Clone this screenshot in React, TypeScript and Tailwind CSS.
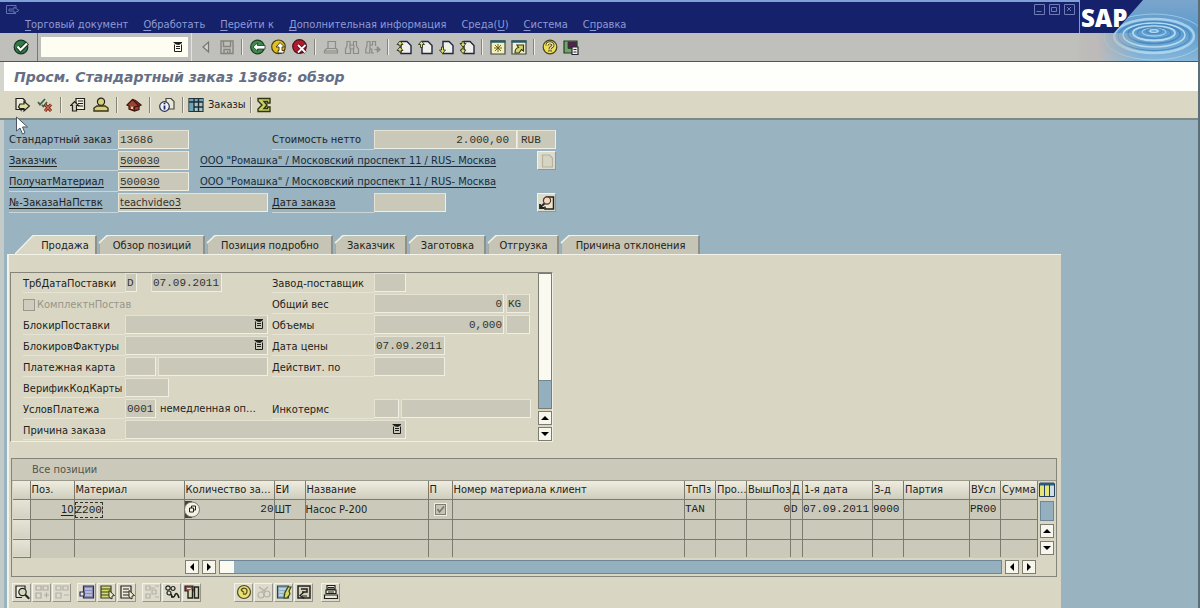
import React, { useState } from "react";
import clsx from "clsx";

type IconProps = { children: React.ReactNode; size?: number };

const Ico = ({ children, size = 16 }: IconProps) => (
  <svg width={size} height={size} viewBox="0 0 16 16" fill="none" stroke="#22221c" strokeWidth="1.2">
    {children}
  </svg>
);

const pageShape = "M5 2.5h6l4 4v8H5z";

const icons: Record<string, React.ReactNode> = {
  ok: (
    <Ico>
      <circle cx="8" cy="8" r="6.8" fill="#2f7a45" stroke="#17331f" />
      <path d="M4.5 7.5l3 3.5L14.5 4" stroke="#17331f" strokeWidth="4" />
      <path d="M4.5 7.5l3 3.5L14 4.5" stroke="#fff" strokeWidth="2.2" />
    </Ico>
  ),
  left: (
    <Ico>
      <path d="M10.5 3v10L5 8z" fill="#d4d3cc" stroke="#77776f" />
    </Ico>
  ),
  save: (
    <Ico>
      <path d="M2 2h12v12.5H2zM4.5 2v5.5h7V2M5 14.5v-4h6v4M8.5 12v2" stroke="#85857c" strokeWidth="1.4" />
    </Ico>
  ),
  back: (
    <Ico>
      <circle cx="7.5" cy="8" r="6.8" fill="#3d8a4c" stroke="#1d3a22" />
      <path d="M3 8l4.5-4v2.5H15v3.500H7.5V12z" fill="#fff" stroke="#1d3a22" strokeWidth="0.8" />
    </Ico>
  ),
  up: (
    <Ico>
      <circle cx="7.5" cy="7.8" r="6.8" fill="#e3c21f" stroke="#4b3c0c" />
      <path d="M9 3.500l4.500 4.500h-2.500v3.500h2v2.500H7V11.500h1V8H5z" fill="#fff" stroke="#3c300c" strokeWidth="0.9" />
    </Ico>
  ),
  cancel: (
    <Ico>
      <circle cx="7.5" cy="7.5" r="6.8" fill="#b3192c" stroke="#4e0d16" />
      <path d="M6 6l7.500 7.500M13.500 6L6 13.500" stroke="#4e0d16" strokeWidth="3.4" />
      <path d="M6 6l7.500 7.500M13.500 6L6 13.500" stroke="#fff" strokeWidth="1.8" />
    </Ico>
  ),
  print: (
    <Ico>
      <path d="M5 9V2.5h7.5V9M3.5 9.5h10l1 2v2.500h-13v-2zM2 12h12" stroke="#8c8c84" />
    </Ico>
  ),
  find: (
    <Ico>
      <path d="M3 2.5h3V6h3.5V2.5h3V7l2 3v4.500H9.5V10h-3v4.500H1.5V10l1.500-3zM6 6v4M9.8 6v4" stroke="#8c8c84" />
    </Ico>
  ),
  findNext: (
    <Ico>
      <path d="M2 2.5h3V6h2.500V2.5h3V7M2 2.5V7L.8 10v4h4V10h2v4H9M5 6v4M9.5 10.5h5.500M12.3 7.5v6M13 8.5l2 2-2 2" stroke="#8c8c84" />
    </Ico>
  ),
  first: (
    <Ico>
      <path d={pageShape} fill="#f1f0e8" stroke="#1e2744" strokeWidth="1.4" />
      <path d="M1 5.5l3-3.500 3 3.500H5v1.500H3V5.5zM1 11.5L4 8l3 3.500H5V13H3v-1.500z" fill="#e0e06c" stroke="#30361b" strokeWidth="0.9" />
    </Ico>
  ),
  prev: (
    <Ico>
      <path d={pageShape} fill="#f1f0e8" stroke="#1e2744" strokeWidth="1.4" />
      <path d="M1.5 5.5l3-3.500 3 3.500h-2v3h-2v-3z" fill="#e0e06c" stroke="#30361b" strokeWidth="0.9" />
    </Ico>
  ),
  next: (
    <Ico>
      <path d={pageShape} fill="#f1f0e8" stroke="#1e2744" strokeWidth="1.4" />
      <path d="M1.5 11l3 3.500 3-3.500h-2V8h-2v3z" fill="#e0e06c" stroke="#30361b" strokeWidth="0.9" />
    </Ico>
  ),
  last: (
    <Ico>
      <path d={pageShape} fill="#f1f0e8" stroke="#1e2744" strokeWidth="1.4" />
      <path d="M1 4.5L4 8l3-3.500H5V2.5H3v2zM1 11l3 3.500L7 11H5V9H3v2z" fill="#e0e06c" stroke="#30361b" strokeWidth="0.9" />
    </Ico>
  ),
  newWindow: (
    <Ico>
      <path d="M1 2h14v13H1z" fill="#f2efb8" stroke="#3d4a45" />
      <path d="M.5 2.5h15" stroke="#2d5a67" strokeWidth="2.5" />
      <path d="M8 5v8M4 9h8M5 6l6 6M11 6l-6 6" stroke="#5e5a12" strokeWidth="0.9" />
    </Ico>
  ),
  shortcut: (
    <Ico>
      <path d="M1 2h14v13H1z" fill="#f2f0cf" stroke="#3d4a45" />
      <path d="M.5 2.5h15" stroke="#2d5a67" strokeWidth="2.5" />
      <path d="M4 14c0-4 1-5 3.500-5.500L6 6h6.500v6l-2-1.500L8 14z" fill="#d4d36d" stroke="#3a3a18" />
    </Ico>
  ),
  help: (
    <Ico>
      <circle cx="8" cy="8" r="6.8" fill="#eedf55" stroke="#49421a" />
      <path d="M5 6.5C5 3 11 3 11 6.2c0 2-3 1.800-3 4M8 11v2" stroke="#49421a" strokeWidth="3" />
      <path d="M5 6.5C5 3 11 3 11 6.2c0 2-3 1.800-3 4M8 11.5v1.500" stroke="#fff9c4" strokeWidth="1.2" />
    </Ico>
  ),
  layout: (
    <Ico>
      <path d="M1 2h13v12H1z" fill="#6fa765" stroke="#263a2b" />
      <path d="M5 3h8.500v6.500H5z" fill="#56214d" stroke="#263a2b" strokeWidth="0.8" />
      <path d="M9 8h6v7.500H9zM10.500 10.500h3M10.500 13h3" fill="#f5f3e8" stroke="#28283c" />
    </Ico>
  ),
  display: (
    <Ico>
      <path d="M10 12.5H2v-11h7l2 2v3" fill="#ecebd8" />
      <path d="M6 7h4V4.5L15.500 9 10 14v-2.500H7V13L4.5 10z" fill="#e3df9b" />
    </Ico>
  ),
  statusCheck: (
    <Ico>
      <path d="M1 5l2 2.500L8 2M5 8l1.500 1.500L10 5" stroke="#456246" strokeWidth="1.8" />
      <path d="M8 7.5l6 6.500M14 7.5L8 14" stroke="#6b2118" strokeWidth="3" />
      <path d="M8 7.5l6 6.500M14 7.5L8 14" stroke="#cf664b" strokeWidth="1.4" />
    </Ico>
  ),
  headerDoc: (
    <Ico>
      <path d="M6 1.5h8.500v11H6zM8 4h5M8 6.5h5M8 9h5" fill="#f3f1df" />
      <path d="M.8 8.5L4.5 4.5l4 4h-2v5.500h-4V8.5z" fill="#d5d3bf" />
    </Ico>
  ),
  person: (
    <Ico>
      <circle cx="8" cy="4.8" r="3.6" fill="#d8cf76" />
      <path d="M1 14V11l3-2h8l3 2v3z" fill="#d8cf76" stroke="#39361b" strokeWidth="1.4" />
    </Ico>
  ),
  house: (
    <Ico>
      <path d="M1 8l5.500-5.500 3 1L15 8l-2 1v3.500L8.5 14 3 12V9z" fill="#9c4331" stroke="#3f1610" />
      <path d="M6.5 2.5L13 9l-4.500 1v4M6 9v3.500" stroke="#3f1610" />
      <path d="M5 9.5h2V12H5z" fill="#e8c9a5" stroke="none" />
    </Ico>
  ),
  infoDoc: (
    <Ico>
      <path d="M7 1.5h5l3 3v7.500H7z" fill="#e9e7d5" stroke="#4a4a44" />
      <circle cx="5.5" cy="9.5" r="4.8" fill="#f2f2f2" stroke="#27335c" />
      <path d="M5.5 8.5v4M5.5 5.8v1.400" stroke="#1f2b66" strokeWidth="1.8" />
    </Ico>
  ),
  orders: (
    <Ico>
      <path d="M1 1.500h14v13H1z" fill="#a9c6c9" stroke="#22333d" />
      <path d="M1.500 2h4v12h-4zM6 2h9v3H6z" fill="#6ea5b6" stroke="none" />
      <path d="M1 5h14M6 2v13M10.5 2v13M6 10h9" stroke="#1d2b35" strokeWidth="1.4" />
    </Ico>
  ),
  sigma: (
    <Ico>
      <path d="M2 1.5h12v4.500h-2.500V4.5H8L11 8l-3 3.500h3.500V10H14v4.500H2V12l4-4-4-4z" fill="#c9d05c" stroke="#2f3515" strokeWidth="1.4" />
    </Ico>
  ),
  detail: (
    <Ico>
      <path d="M2 13.5V2h9v3M2 13.5h6" fill="#f2f0e2" />
      <circle cx="8.5" cy="8" r="3.7" fill="#d4d7bf" />
      <path d="M11.2 10.8l4 4" strokeWidth="2" />
    </Ico>
  ),
  plus: (
    <Ico>
      <path d="M2 2h5v4H2zM9 2h5v4H9zM2 9h5v5H2zM10 11h5M12.5 8.5v5" stroke="#adac9f" />
    </Ico>
  ),
  minus: (
    <Ico>
      <path d="M2 2h5v4H2zM9 2h5v4H9zM2 9h5v5H2zM10 11h5" stroke="#b3b2a5" />
    </Ico>
  ),
  selectAll: (
    <Ico>
      <path d="M4.5 2h10v12h-10z" fill="#888cba" stroke="#2b2d4e" />
      <path d="M6 5h7M6 8h7M6 11h7" stroke="#e7e8ef" />
      <path d="M1 8h4v4H1z" fill="#e6e6df" stroke="#2b2d4e" />
    </Ico>
  ),
  selectBlock: (
    <Ico>
      <path d="M2 2h10v12H2z" fill="#d9dd6b" stroke="#394025" />
      <path d="M2 5h10M2 8h10M2 11h10" stroke="#394025" />
      <path d="M10 6.5l5.500 5-2.500.5V15l-3-2z" fill="#f0edc6" strokeWidth="0.9" />
    </Ico>
  ),
  deselect: (
    <Ico>
      <path d="M2 2h10v12H2zM4 5h6M4 8h6M4 11h6" fill="#eceada" />
      <path d="M10 6.5l5.500 5-2.500.5V15l-3-2z" fill="#f0edc6" strokeWidth="0.9" />
    </Ico>
  ),
  tree: (
    <Ico>
      <path d="M2 2h4v4H2zM8 6h4v4H8zM2 10h4v4H2zM11 2h4M11 13h4M6 4h5" stroke="#b3b2a5" />
    </Ico>
  ),
  chain: (
    <Ico>
      <circle cx="4" cy="4" r="2.2" />
      <circle cx="9" cy="4.5" r="2" />
      <circle cx="5" cy="9" r="2" />
      <path d="M7 10c1 4 3 4 4 1s3-1 4 3M7 13h3" strokeWidth="1.6" />
    </Ico>
  ),
  config: (
    <Ico>
      <path d="M1 2h8v5H1z" fill="#9e4a46" />
      <path d="M4 7v7h4.500V5M10.500 3h4v11h-4z" fill="#d8d5b6" strokeWidth="1.4" />
      <path d="M3 4.5h4" stroke="#f0e2d6" />
    </Ico>
  ),
  clock: (
    <Ico>
      <circle cx="8" cy="8" r="6.5" fill="#eadf70" stroke="#4b461f" />
      <path d="M5 6c2-3 6-2 6 1S9 11 7 9.500M5 6l3 2.500" stroke="#4b461f" />
    </Ico>
  ),
  cut: (
    <Ico>
      <circle cx="5" cy="11" r="3" stroke="#b3b2a5" />
      <circle cx="11" cy="10" r="3" stroke="#b3b2a5" />
      <path d="M3 3l7 5M12 3L6 8" stroke="#b3b2a5" />
    </Ico>
  ),
  edit: (
    <Ico>
      <path d="M1.5 2h11v12h-11z" fill="#8cb0c4" stroke="#28404e" />
      <path d="M3 5h7M3 8h5M3 11h4" stroke="#f1f1ea" />
      <path d="M8 14L9 8.500l3-5.500h3l-2 4 1 3-3 4z" fill="#dada59" stroke="#384021" />
    </Ico>
  ),
  route: (
    <Ico>
      <path d="M2 14V2h12v12zM5 5h6v3H6" fill="#d2cfbd" strokeWidth="1.5" />
      <path d="M11 12H6M8 8l-4 3.500 4 3" />
    </Ico>
  ),
  stack: (
    <Ico>
      <path d="M4 1.5h8V5H4zM3 6h10v3.500H3zM1.5 11h13v3.500h-13zM5 3.5h6M5 8h6" fill="#eceada" />
    </Ico>
  ),
  partner: (
    <Ico>
      <path d="M7 2h7.500v12H6v-2.500" fill="#e9e6cf" strokeWidth="1.5" />
      <circle cx="8" cy="5.5" r="3.6" fill="#efd9c5" stroke="#5b3527" />
      <path d="M5.500 8.500L1.500 12M1 9v4h4.500" strokeWidth="1.8" />
    </Ico>
  ),
  blankPage: (
    <Ico>
      <path d="M3.5 2h7l3 3v9h-10z" fill="#d6d4c3" stroke="#b4b2a0" />
    </Ico>
  ),
  list: (
    <svg width="10" height="10" viewBox="0 0 10 10" fill="none" stroke="#1f1f1a">
      <path d="M1.5 2.500v7h7v-7" />
      <path d="M3 4.500h4M3 6.500h4" />
      <path d="M0 0h9v1L6 3 3 2.500z" fill="#1f1f1a" stroke="none" />
    </svg>
  ),
};

const systemButtons = [
  ["left", "save"],
  ["back", "up", "cancel"],
  ["print", "find", "findNext"],
  ["first", "prev", "next", "last"],
  ["newWindow", "shortcut"],
  ["help", "layout"],
];

const appButtons = [["display", "statusCheck"], ["headerDoc", "person"], ["house"], ["infoDoc"]];

const footerButtons = [
  { names: ["detail", "plus", "minus"], gap: "mr-[6px]" },
  { names: ["selectAll", "selectBlock", "deselect"], gap: "mr-[6px]" },
  { names: ["tree", "chain", "config"], gap: "mr-[33px]" },
  { names: ["clock", "cut", "edit", "route"], gap: "mr-[8px]" },
  { names: ["stack"], gap: "" },
];

const menu = [
  ["", "Т", "орговый документ"],
  ["", "О", "бработать"],
  ["", "П", "ерейти к"],
  ["", "Д", "ополнительная информация"],
  ["Среда(", "U", ")"],
  ["", "С", "истема"],
  ["С", "п", "равка"],
];

const tabs = [
  { name: "Продажа", width: "w-[82px]" },
  { name: "Обзор позиций", width: "w-[108px]" },
  { name: "Позиция подробно", width: "w-[128px]" },
  { name: "Заказчик", width: "w-[74px]" },
  { name: "Заготовка", width: "w-[79px]" },
  { name: "Отгрузка", width: "w-[73px]" },
  { name: "Причина отклонения", width: "w-[141px]" },
];

const columns = [
  { title: "", width: "w-[17px]" },
  { title: "Поз.", width: "w-[44px]" },
  { title: "Материал", width: "w-[110px]" },
  { title: "Количество за…", width: "w-[90px]" },
  { title: "ЕИ", width: "w-[31px]" },
  { title: "Название", width: "w-[123px]" },
  { title: "П", width: "w-[24px]" },
  { title: "Номер материала клиент", width: "" },
  { title: "ТпПз", width: "w-[31px]" },
  { title: "Про…", width: "w-[31px]" },
  { title: "ВышПоз", width: "w-[44px]" },
  { title: "Д", width: "w-[12px]" },
  { title: "1-я дата", width: "w-[70px]" },
  { title: "З-д", width: "w-[31px]" },
  { title: "Партия", width: "w-[66px]" },
  { title: "ВУсл", width: "w-[31px]" },
  { title: "Сумма", width: "w-[37px]" },
];

const mono = "font-['Liberation_Mono',monospace]";

interface FieldProps {
  id: string;
  value?: string;
  className?: string;
  label?: string;
}

// read-only SAP input
const Field = ({ id, value = "", className, label }: FieldProps) => (
  <input
    id={id}
    readOnly
    value={value}
    aria-label={label}
    className={clsx(
      "h-[19px] shrink-0 border border-t-[#e4e3d4] border-l-[#e4e3d4] border-r-[#f0efe4] border-b-[#f0efe4] bg-[#c9c8b9] px-px text-[11px] text-[#33332c] outline-none",
      className
    )}
  />
);

const ListField = ({ id, className }: { id: string; className: string }) => (
  <div className={clsx("relative", className)}>
    <Field id={id} className="w-full" />
    <button aria-label="Список" className="absolute right-1 top-1">
      {icons.list}
    </button>
  </div>
);

const HeadLabel = ({ htmlFor, children, link }: { htmlFor: string; children: React.ReactNode; link?: boolean }) => (
  <label
    htmlFor={htmlFor}
    className={clsx("h-[20px] shrink-0 border-b border-[#c8d6d8] leading-[20px]", link && "underline underline-offset-2")}
  >
    {children}
  </label>
);

const FormLabel = ({ htmlFor, children }: { htmlFor: string; children: React.ReactNode }) => (
  <label htmlFor={htmlFor} className="h-[20px] whitespace-nowrap border-b border-[#e5e3d4] leading-[21px]">
    {children}
  </label>
);

const Arrow = ({ dir }: { dir: "up" | "down" | "left" | "right" }) => {
  const d = {
    up: "M2 8h8L6 4z",
    down: "M2 4h8L6 8z",
    left: "M8 2v8L4 6z",
    right: "M4 2v8l4-4z",
  }[dir];
  return (
    <button
      aria-label={dir}
      className="flex h-[14px] w-[14px] shrink-0 items-center justify-center border border-[#7d7c70] bg-[#f7f6ec]"
    >
      <svg width="12" height="12" viewBox="0 0 12 12" className="shrink-0">
        <path d={d} fill="#000" />
      </svg>
    </button>
  );
};

const Separator = () => (
  <span className="flex h-[16px] w-[10px] shrink-0 justify-center">
    <span className="w-px bg-[#85847a]" />
    <span className="w-px bg-[#efeee4]" />
  </span>
);

const Raised = ({ name }: { name: string }) => (
  <button
    aria-label={name}
    className="flex h-[19px] w-[19px] items-center justify-center border border-t-[#f4f3e8] border-l-[#f4f3e8] border-r-[#97968a] border-b-[#97968a] bg-[#dddbcc]"
  >
    {icons[name]}
  </button>
);

const Brand = () => (
  <svg width="119" height="61" viewBox="0 0 119 61" className="shrink-0">
    <defs>
      <linearGradient id="water" x1="0" y1="0" x2="0" y2="1">
        <stop offset="0" stopColor="#7ba5cb" />
        <stop offset="0.5" stopColor="#5b9bd0" />
        <stop offset="1" stopColor="#87b7da" />
      </linearGradient>
      <linearGradient id="fade" x1="0" y1="0" x2="1" y2="0">
        <stop offset="0" stopColor="#bdbdb9" />
        <stop offset="0.3" stopColor="#bdbab9" />
        <stop offset="1" stopColor="#bdbdb9" stopOpacity="0" />
      </linearGradient>
    </defs>
    <path d="M0 0h119v61H0z" fill="url(#water)" />
    <g fill="none">
      <g stroke="#b6ddf1">
        <ellipse cx="75" cy="31" rx="4" ry="1.5" strokeWidth="1.5" />
        <ellipse cx="75" cy="32" rx="12" ry="4" />
        <ellipse cx="75" cy="33" rx="21" ry="7.5" strokeWidth="1.8" />
        <ellipse cx="75" cy="35" rx="31" ry="12" strokeWidth="1.5" />
        <ellipse cx="75" cy="36" rx="40" ry="17" strokeWidth="2.5" opacity="0.8" />
        <ellipse cx="75" cy="37" rx="50" ry="23" opacity="0.6" />
      </g>
      <g stroke="#3b7cb5" opacity="0.7">
        <ellipse cx="75" cy="31" rx="8" ry="2.5" />
        <ellipse cx="75" cy="33" rx="17" ry="5.5" />
        <ellipse cx="75" cy="34" rx="26" ry="9.5" strokeWidth="1.5" />
        <ellipse cx="75" cy="36" rx="36" ry="14.5" />
      </g>
    </g>
    <path d="M0 33h62v28H0z" fill="url(#fade)" />
    <path d="M0 0h64L35 33H0z" fill="#15216a" />
    <path d="M0 0h1v33H0z" fill="#8d96c0" />
    <text x="2" y="27" fill="#fff" fontSize="24" fontWeight="800" fontFamily="'Open Sans', sans-serif">
      SAP
    </text>
  </svg>
);

interface CellProps {
  children?: React.ReactNode;
  className?: string;
  head?: boolean;
  last?: boolean;
}

const Cell = ({ children, className, head, last }: CellProps) => (
  <td
    className={clsx(
      "overflow-hidden whitespace-nowrap border-r border-[#7b7a6e] p-0 leading-[17px]",
      (!last || head) && "border-b",
      head && "bg-linear-to-b from-[#e6e4d5] to-[#d3d1c1]",
      className
    )}
  >
    {children}
  </td>
);

const ItemsTable = () => (
  <table className="w-full table-fixed border-collapse text-left">
    <colgroup>
      {columns.map((c, i) => (
        <col key={i} className={c.width} />
      ))}
    </colgroup>
    <thead>
      <tr className="h-[18px] bg-linear-to-b from-[#efede0] to-[#cfcdbd]">
        {columns.map((c, i) => (
          <th
            key={i}
            className="overflow-hidden whitespace-nowrap border-r border-b border-[#7b7a6e] p-0 pl-px font-normal leading-[17px]"
          >
            {c.title}
          </th>
        ))}
      </tr>
    </thead>
    <tbody>
      <tr className="h-[20px]">
        <Cell head />
        <Cell className="text-right underline underline-offset-2">10</Cell>
        <Cell>
          <span className={clsx("inline-block border border-dashed border-[#33332c] leading-[14px]", mono)}>Z200</span>
        </Cell>
        <Cell>
          <span className="flex items-center justify-between">
            <svg width="15" height="17" viewBox="0 0 15 17" fill="none">
              <path d="M0 0h7v17H0z" fill="#44443c" />
              <circle cx="7" cy="8.5" r="7.5" fill="#f3f1e4" stroke="#77766a" />
              <path d="M4.5 7h4v4h-4zM6.5 7V5h4v4h-2" stroke="#22221c" />
            </svg>
            <span className={mono}>20</span>
          </span>
        </Cell>
        <Cell>ШТ</Cell>
        <Cell>Насос P-200</Cell>
        <Cell className="text-center">
          <span className="inline-flex h-[13px] w-[13px] items-center justify-center border border-[#efeee2] bg-[#c4c3b4] align-middle">
            <input
              type="checkbox"
              checked
              readOnly
              aria-label="П"
              className="h-[11px] w-[11px] appearance-none border border-[#7e7d70]"
            />
            <svg width="9" height="9" viewBox="0 0 9 9" className="pointer-events-none absolute" fill="none">
              <path d="M1.5 4l2 3L8 1.500" stroke="#77766b" strokeWidth="1.6" />
            </svg>
          </span>
        </Cell>
        <Cell />
        <Cell className={mono}>TAN</Cell>
        <Cell />
        <Cell className={clsx("text-right", mono)}>0</Cell>
        <Cell className={mono}>D</Cell>
        <Cell className={mono}>07.09.2011</Cell>
        <Cell className={mono}>9000</Cell>
        <Cell />
        <Cell className={mono}>PR00</Cell>
        <Cell />
      </tr>
      <tr className="h-[20px]">
        {columns.map((_, i) => (
          <Cell key={i} head={i === 0} />
        ))}
      </tr>
      <tr className="h-[18px]">
        {columns.map((_, i) => (
          <Cell key={i} head={i === 0} last />
        ))}
      </tr>
    </tbody>
  </table>
);

export default function App() {
  const [activeTab, setActiveTab] = useState("Продажа");
  const [command, setCommand] = useState("");

  return (
    <div className="relative flex min-h-screen w-full flex-col border-r-2 border-[#5c6f78] bg-[#99b3c1] font-['DejaVu_Sans_Condensed','DejaVu_Sans',sans-serif] text-[11px] text-[#22221c]">
      <header className="flex border-b border-[#55554f] bg-[#bfbfbb]">
        <div className="min-w-0 flex-1">
          <div className="h-[33px] border-t-2 border-[#7f9fd6] bg-[#15216a] text-[#8d9bd6]">
            <div className="flex h-[15px] items-center justify-between pl-[5px] pr-1">
              <svg width="15" height="12" viewBox="0 0 15 12" fill="none" stroke="#6370ad">
                <path d="M11 9.5H1.5v-8H11V4M4 5h5V3l5 3.500L9 9V7H4z" />
              </svg>
              <div className="flex gap-1">
                {["M2.500 7.500h5", "M2.500 3.500h5v4h-5z", "M3 3l4 4M7 3L3 7"].map((d) => (
                  <button key={d} aria-label="Окно">
                    <svg width="11" height="11" viewBox="0 0 11 11" fill="none" stroke="#6f7bb5">
                      <path d="M.5.5h10v10H.5z" />
                      <path d={d} />
                    </svg>
                  </button>
                ))}
              </div>
            </div>
            <nav className="flex gap-[15px] pl-[25px] leading-[16px]">
              {menu.map(([before, key, after]) => (
                <button key={after} className="whitespace-nowrap">
                  {before}
                  <span className="underline underline-offset-2">{key}</span>
                  {after}
                </button>
              ))}
            </nav>
          </div>
          <div className="flex h-[28px] items-center">
            <button
              aria-label="Enter"
              className="flex h-full w-[38px] items-center justify-center border-r border-[#77776f] pl-1"
            >
              {icons.ok}
            </button>
            <div className="relative ml-[3px] mr-[3px]">
              <input
                aria-label="Команда"
                value={command}
                onChange={(e) => setCommand(e.target.value)}
                className="block h-[20px] w-[147px] bg-[#fdfdf2] px-1 outline-none"
              />
              <span className="absolute right-[5px] top-[5px]">{icons.list}</span>
            </div>
            <span className="mr-[3px] h-full w-px bg-[#e4e4df]" />
            {systemButtons.map((group, i) => (
              <React.Fragment key={i}>
                {i > 0 && <Separator />}
                {group.map((name) => (
                  <button key={name} aria-label={name} className="flex w-[21px] shrink-0 justify-center">
                    {icons[name]}
                  </button>
                ))}
              </React.Fragment>
            ))}
          </div>
        </div>
        <Brand />
      </header>

      <h1 className="h-[29px] border-l-4 border-[#d5d5cf] bg-[#fefefa] pl-[10px] font-['DejaVu_Sans',sans-serif] text-[14px] font-bold italic leading-[30px] text-[#656f86]">
        Просм. Стандартный заказ 13686: обзор
      </h1>

      <div className="flex h-[29px] items-center border-b-2 border-[#7b8a86] bg-[#dad7c4] pl-[10px]">
        {appButtons.map((group, i) => (
          <React.Fragment key={i}>
            {group.map((name) => (
              <button key={name} aria-label={name} className="flex w-[23px] shrink-0 justify-center">
                {icons[name]}
              </button>
            ))}
            <Separator />
          </React.Fragment>
        ))}
        <button className="flex items-center gap-1">
          {icons.orders}
          <span className="pt-[2px]">Заказы</span>
        </button>
        <Separator />
        <button aria-label="Сумма">{icons.sigma}</button>
      </div>

      <svg width="14" height="20" viewBox="0 0 14 20" className="pointer-events-none absolute left-[15px] top-[116px]">
        <path d="M1.5 1v14l3.500-3 2.500 6 2.500-1-2.500-6h5z" fill="#fff" stroke="#4a5560" />
      </svg>

      <main className="flex flex-1 flex-col border-l-4 border-[#c3cbc9]">
        <section className="w-[552px] pl-[5px] pt-[10px]">
          <div className="flex h-[21px]">
            <div className="flex w-[109px] flex-col">
              <HeadLabel htmlFor="order">Стандартный заказ</HeadLabel>
            </div>
            <Field id="order" value="13686" className={clsx("w-[71px]", mono)} />
            <div className="ml-[83px] flex w-[102px] flex-col">
              <HeadLabel htmlFor="net">Стоимость нетто</HeadLabel>
            </div>
            <Field id="net" value="2.000,00" className={clsx("w-[143px] pr-[7px] text-right", mono)} />
            <Field id="currency" label="Валюта" value="RUB" className={clsx("w-[39px] pl-[3px]", mono)} />
          </div>
          {[
            ["Заказчик", "customer"],
            ["ПолучатМатериал", "receiver"],
          ].map(([title, id]) => (
            <div key={id} className="flex h-[21px]">
              <div className="flex w-[109px] flex-col">
                <HeadLabel htmlFor={id} link>
                  {title}
                </HeadLabel>
              </div>
              <Field id={id} value="500030" className={clsx("w-[71px] underline underline-offset-2", mono)} />
              <a href="#partner" className="ml-[11px] whitespace-nowrap leading-[20px] text-[#172c3c] underline underline-offset-2">
                ООО "Ромашка" / Московский проспект 11 / RUS- Москва
              </a>
              {id === "customer" && (
                <span className="ml-auto">
                  <Raised name="blankPage" />
                </span>
              )}
            </div>
          ))}
          <div className="flex h-[21px]">
            <div className="flex w-[109px] flex-col">
              <HeadLabel htmlFor="po" link>
                №-ЗаказаНаПствк
              </HeadLabel>
            </div>
            <Field id="po" value="teachvideo3" className="w-[150px] underline underline-offset-2" />
            <div className="ml-1 flex w-[102px] flex-col">
              <HeadLabel htmlFor="poDate" link>
                Дата заказа
              </HeadLabel>
            </div>
            <Field id="poDate" className="w-[72px]" />
            <span className="ml-auto">
              <Raised name="partner" />
            </span>
          </div>
        </section>

        <div role="tablist" className="mt-[21px] flex pl-[11px]">
          {tabs.map((t) => {
            const active = t.name === activeTab;
            return (
              <button
                key={t.name}
                role="tab"
                aria-selected={active}
                onClick={() => setActiveTab(t.name)}
                className={clsx("flex h-[19px] shrink-0", t.width)}
              >
                {active ? (
                  <svg width="20" height="19" viewBox="0 0 20 19" className="shrink-0">
                    <path d="M0 19L18 .5h2V19z" fill="#d9d7c4" />
                    <path d="M0 19L18 .5h2" fill="none" stroke="#f3f2e8" strokeWidth="1.3" />
                  </svg>
                ) : (
                  <svg width="12" height="19" viewBox="0 0 12 19" className="shrink-0">
                    <path d="M2 19V8L10 .5h2V19z" fill="#c5c4b5" />
                    <path d="M2 8L10 .5h2" fill="none" stroke="#f3f2e8" strokeWidth="1.6" />
                    <path d="M2.500 19V9" stroke="#a9a99d" />
                  </svg>
                )}
                <span
                  className={clsx(
                    "h-full flex-1 whitespace-nowrap border-t border-r-2 border-t-[#f3f2e8] border-r-[#8f9087] text-center leading-[19px]",
                    active ? "bg-[#d9d7c4]" : "bg-[#c5c4b5] pr-2"
                  )}
                >
                  {t.name}
                </span>
              </button>
            );
          })}
        </div>

        <section className="mr-[137px] ml-[3px] flex-1 border-t border-l-2 border-t-[#f3f2e8] border-l-[#f3f2e8] bg-[#d9d7c4] pt-[17px] pb-1">
          <div className="ml-px flex h-[170px] w-[543px] border border-t-[#85847a] border-l-[#85847a] border-r-[#f0efe4] border-b-[#f0efe4]">
            <div className="grid flex-1 grid-cols-[102px_147px_102px_1fr] content-start pl-[12px]">
              <FormLabel htmlFor="delivDate">ТрбДатаПоставки</FormLabel>
              <div className="flex h-[21px] gap-[14px]">
                <Field id="delivType" label="Тип даты" value="D" className={clsx("w-[12px]", mono)} />
                <Field id="delivDate" value="07.09.2011" className={clsx("w-[71px]", mono)} />
              </div>
              <FormLabel htmlFor="plant">Завод-поставщик</FormLabel>
              <Field id="plant" className="w-[32px]" />

              <label className="col-span-2 flex h-[21px] items-center gap-[2px] text-[#96958a]">
                <input type="checkbox" disabled className="h-[12px] w-[12px] appearance-none border border-[#99988b] bg-[#cfcdbd]" />
                <span className="pt-[2px]">КомплектнПостав</span>
              </label>
              <FormLabel htmlFor="weight">Общий вес</FormLabel>
              <div className="flex gap-[2px]">
                <Field id="weight" value="0" className={clsx("w-[130px] text-right", mono)} />
                <Field id="unit" label="Единица веса" value="KG" className={clsx("w-[24px]", mono)} />
              </div>

              <FormLabel htmlFor="delivBlock">БлокирПоставки</FormLabel>
              <ListField id="delivBlock" className="h-[21px] w-[143px]" />
              <FormLabel htmlFor="volume">Объемы</FormLabel>
              <div className="flex gap-[2px]">
                <Field id="volume" value="0,000" className={clsx("w-[130px] text-right", mono)} />
                <Field id="volumeUnit" label="Единица объема" className="w-[24px]" />
              </div>

              <FormLabel htmlFor="billBlock">БлокировФактуры</FormLabel>
              <ListField id="billBlock" className="h-[21px] w-[143px]" />
              <FormLabel htmlFor="priceDate">Дата цены</FormLabel>
              <Field id="priceDate" value="07.09.2011" className={clsx("w-[71px]", mono)} />

              <FormLabel htmlFor="card">Платежная карта</FormLabel>
              <div className="flex h-[21px] gap-[2px]">
                <Field id="cardType" label="Тип карты" className="w-[31px]" />
                <Field id="card" className="w-[110px]" />
              </div>
              <FormLabel htmlFor="validTo">Действит. по</FormLabel>
              <Field id="validTo" className="w-[71px]" />

              <FormLabel htmlFor="cvc">ВерификКодКарты</FormLabel>
              <div className="col-span-3 h-[21px]">
                <Field id="cvc" className="block w-[44px]" />
              </div>

              <FormLabel htmlFor="terms">УсловПлатежа</FormLabel>
              <div className="flex h-[21px] gap-1">
                <Field id="terms" value="0001" className={clsx("w-[31px]", mono)} />
                <span className="whitespace-nowrap leading-[20px]">немедленная оп…</span>
              </div>
              <FormLabel htmlFor="incoterms">Инкотермс</FormLabel>
              <div className="flex gap-[2px]">
                <Field id="incoterms" className="w-[25px]" />
                <Field id="incoPlace" label="Место" className="w-[130px]" />
              </div>

              <FormLabel htmlFor="reason">Причина заказа</FormLabel>
              <div className="col-span-3 h-[21px]">
                <ListField id="reason" className="h-[19px] w-[281px]" />
              </div>
            </div>
            <div className="flex w-[14px] flex-col gap-[2px]">
              <div className="flex flex-1 flex-col border border-[#7d7c70] bg-[#fbfaf0]">
                <div className="mt-auto h-[28px] border-t border-[#6f8694] bg-[#94afbe]" />
              </div>
              <Arrow dir="up" />
              <Arrow dir="down" />
            </div>
          </div>

          <div className="ml-[2px] mr-[4px] mt-4 border border-[#85847a]">
            <div className="h-[22px] border-b border-[#99988b] bg-[#cbcaba] pl-[20px] leading-[22px] text-[#55544a]">
              Все позиции
            </div>
            <div className="flex pl-px">
              <div className="relative min-w-0 flex-1 bg-[#cbcaba]">
                <ItemsTable />
              </div>
              <div className="flex w-[18px] flex-col items-center gap-[3px]">
                <button aria-label="Настройка таблицы">
                  <svg width="16" height="17" viewBox="0 0 16 17" fill="none">
                    <path d="M.5 2.500h15v13H.5z" fill="#e5e67a" stroke="#28405c" />
                    <path d="M11 5h4v10h-4z" fill="#cfe0e4" />
                    <path d="M1 3h14" stroke="#2d5a78" strokeWidth="3" />
                    <path d="M5.500 4v11M10.500 4v11" stroke="#28405c" />
                  </svg>
                </button>
                <div className="h-[20px] w-[14px] border border-[#6f8694] bg-[#94afbe]" />
                <Arrow dir="up" />
                <Arrow dir="down" />
              </div>
            </div>
            <div className="flex h-[18px] items-center gap-[3px] pl-[173px] pr-[20px]">
              <Arrow dir="left" />
              <Arrow dir="right" />
              <div className="flex h-[14px] flex-1 border border-[#6f8694] bg-[#94afbe]">
                <div className="w-[14px] bg-[#fbfaf0]" />
              </div>
              <Arrow dir="left" />
              <Arrow dir="right" />
            </div>
          </div>

          <div className="mt-[6px] flex pl-[3px]">
            {footerButtons.map((g) => (
              <div key={g.names[0]} className={clsx("flex gap-px", g.gap)}>
                {g.names.map((n) => (
                  <Raised key={n} name={n} />
                ))}
              </div>
            ))}
          </div>
        </section>
      </main>
    </div>
  );
}
